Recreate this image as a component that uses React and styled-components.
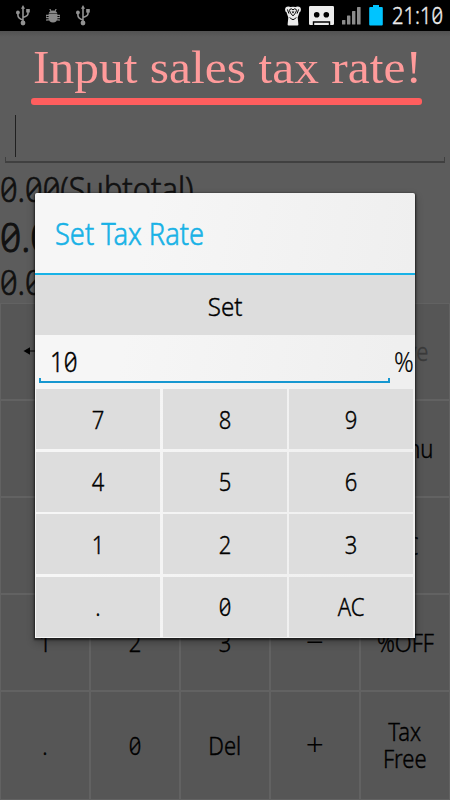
import React from "react";
import styled, { createGlobalStyle } from "styled-components";

const Global = createGlobalStyle`
  * { box-sizing: border-box; }
  body { margin: 0; background: #000; font-family: "Noto Sans", "Open Sans", sans-serif; color: #000; }
`;

const Screen = styled.div`
  position: relative;
  width: 450px;
  height: 800px;
  overflow: hidden;
  display: flex;
  flex-direction: column;
  background: #5c5c5c;
`;

const StatusBar = styled.header`
  height: 31px;
  flex: none;
  display: flex;
  align-items: center;
  justify-content: space-between;
  padding: 0 7px 0 15px;
  background: #000;
`;

const StatusGroup = styled.div`
  display: flex;
  align-items: center;
  gap: ${(p) => p.$gap}px;
`;

const Label = styled.span`
  display: inline-block;
  flex: none;
  white-space: pre;
  font-size: ${(p) => p.$size}px;
  line-height: 1.08;
  font-weight: 300;
  color: ${(p) => p.$color || "#000"};
  -webkit-text-stroke: ${(p) => p.$stroke ?? 0.4}px currentColor;
  font-feature-settings: "zero" 1;
  text-align: center;
  transform: scaleX(${(p) => p.$stretch || 0.89});
  transform-origin: ${(p) => p.$origin || "center"};
`;

const Clock = styled.div`
  width: 51px;
  display: flex;
  margin-left: 1px;
`;

const Banner = styled.div`
  height: 75px;
  flex: none;
  display: flex;
  flex-direction: column;
  padding: 7px 28px 0 31px;
  background: linear-gradient(#525252, #5c5c5c 6px);
`;

const BannerText = styled.h1`
  margin: 0 0 0 2px;
  height: 60px;
  font: 400 47px/59px "Liberation Serif", serif;
  color: #ff9b9b;
  white-space: nowrap;
  transform: scaleX(1.053);
  transform-origin: left;
`;

const BannerRule = styled.div`
  height: 7px;
  border-radius: 3px;
  background: #ff5e5e;
`;

const AmountField = styled.div`
  height: 57px;
  flex: none;
  display: flex;
  flex-direction: column;
  padding: 9px 5px 0;
`;

const Caret = styled.div`
  width: 1px;
  height: 42px;
  margin-left: 10px;
  background: #202020;
`;

const FieldLine = styled.div`
  height: ${(p) => p.$height}px;
  border: solid ${(p) => p.$color};
  border-width: 0 ${(p) => p.$side}px 2px;
`;

const Totals = styled.div`
  height: 140px;
  flex: none;
  display: flex;
  flex-direction: column;
  align-items: flex-start;
  padding-top: 7px;
`;

const TotalRow = styled.div`
  height: ${(p) => p.$height}px;
  display: flex;
  align-items: center;
`;

const MainPad = styled.div`
  flex: 1;
  display: grid;
  grid-template-columns: repeat(5, 88px);
  grid-template-rows: 95px 95px 95px 95px 107px;
  gap: 2px;
  padding: 1px;
  background: #626262;
`;

const MainKey = styled.div`
  display: flex;
  flex-direction: column;
  align-items: center;
  justify-content: center;
  padding-bottom: 1px;
  background: #565656;
`;

const Dialog = styled.section`
  position: absolute;
  left: 35px;
  top: 193px;
  width: 380px;
  height: 445px;
  display: flex;
  flex-direction: column;
  border-radius: 2px 2px 0 0;
  background: linear-gradient(100deg, #f6f6f6 25%, #efefef 85%);
  box-shadow: 0 1px 2px 1px rgba(0, 0, 0, 0.55), 0 4px 8px rgba(0, 0, 0, 0.3);
`;

const DialogTitle = styled.div`
  height: 82px;
  flex: none;
  display: flex;
  align-items: center;
  padding: 2px 0 0 20px;
  border-bottom: 2px solid #18b2e6;
`;

const SetButton = styled.div`
  height: 60px;
  flex: none;
  display: flex;
  align-items: center;
  justify-content: center;
  padding-top: 2px;
  background: #ddd;
`;

const RateRow = styled.div`
  height: 54px;
  flex: none;
  display: flex;
  padding-left: 4px;
`;

const RateInput = styled.div`
  width: 351px;
  flex: none;
  display: flex;
  flex-direction: column;
`;

const RateValue = styled.div`
  height: 43px;
  display: flex;
  align-items: center;
  padding: 9px 0 0 11px;
`;

const Unit = styled.div`
  display: flex;
  align-items: center;
  height: 43px;
  padding: 9px 0 0 4px;
`;

const RatePad = styled.div`
  flex: 1;
  display: grid;
  grid-template-columns: repeat(3, 1fr);
  grid-template-rows: repeat(4, 1fr);
  gap: 2.5px;
  padding: 0 1.5px 1px 1px;
`;

const RateKey = styled.div`
  display: flex;
  align-items: center;
  justify-content: center;
  background: #ddd;
`;

const UsbIcon = () => (
  <svg width="16" height="22" viewBox="0 0 16 22" fill="none" stroke="#929292" strokeWidth="1.6">
    <path d="M8 3v15M8 15Q2.9 13.5 2.9 10V8M8 12.5q5-1.5 5-4V7" />
    <g fill="#929292" stroke="none">
      <path d="M8 0l2 3.7H6z" />
      <circle cx="8" cy="18" r="2.4" />
      <circle cx="2.9" cy="7.5" r="1.9" />
      <path d="M11.2 4h3.6v3.6h-3.6z" />
    </g>
  </svg>
);

const BugIcon = () => (
  <svg width="14" height="14" viewBox="0 0 14 14">
    <g fill="#8a8a8a">
      <path d="M2.6 4.6Q3.4 1.4 7 1.4t4.4 3.2z" />
      <path d="M2.6 5h8.8v4.2Q11 13.6 7 13.6T2.6 9.2z" />
    </g>
    <path d="M3.8 0l1.2 2M10.2 0L9 2M3 6.4H.4v1M3 8.6H0M3 10.8H.8v1M11 6.4h2.6v1M11 8.6h3M11 10.8h2.2v1" fill="none" stroke="#8a8a8a" strokeWidth="1.2" />
  </svg>
);

const BearIcon = () => (
  <svg width="16" height="20" viewBox="0 0 16 20">
    <g fill="#ececec">
      <circle cx="3.3" cy="3.6" r="3.2" />
      <circle cx="12.7" cy="3.6" r="3.2" />
      <path d="M3 2q5-2.6 10 0l1.3 5-1.6 4.4.7 7q0 1-1 1H3.6q-1 0-1-1l.7-7L1.7 7z" />
    </g>
    <path d="M8 3.9Q6.4 2 4.8 3.4 3.7 5.5 8 9.9 12.3 5.5 11.2 3.4 9.6 2 8 3.9zM2.4 3.4l1.5 4.2M13.6 3.4l-1.5 4.2M4.8 11.4Q8 15.8 11.2 11.4" fill="none" stroke="#000" strokeWidth="1" />
    <path d="M6.6 5.4h2.8L8 7.4z" fill="#000" />
  </svg>
);

const CassetteIcon = () => (
  <svg width="25" height="19" viewBox="0 0 25 19">
    <path d="M1.2 0h22.6Q25 0 25 1.2V17.8Q25 19 23.8 19H1.2Q0 19 0 17.8V1.2Q0 0 1.2 0z" fill="#ececec" />
    <circle cx="7.7" cy="8.8" r="2.8" />
    <circle cx="17.3" cy="8.8" r="2.8" />
    <path d="M4.5 19v-3h16v3" fill="none" stroke="#000" strokeWidth="1.4" />
  </svg>
);

const SignalIcon = () => (
  <svg width="19" height="19" viewBox="0 0 19 19" fill="#8b8b8b">
    <rect x="0" y="14" width="3.4" height="4.5" rx=".6" />
    <rect x="5" y="9.5" width="3.4" height="9" rx=".6" />
    <rect x="10" y="5" width="3.4" height="13.5" rx=".6" />
    <rect x="15" y="1" width="3.6" height="17.5" rx=".6" />
  </svg>
);

const BatteryIcon = () => (
  <svg width="14" height="21" viewBox="0 0 14 21">
    <path d="M4 0h6v2h2.8q1 0 1 1v16.5q0 1-1 1H1.2q-1 0-1-1V3q0-1 1-1H4z" fill="#00c4ff" />
  </svg>
);

const ArrowIcon = () => (
  <svg width="44" height="8" viewBox="0 0 44 8">
    <path d="M0.5 4l6.5-3.7v7.4z" />
    <path d="M5 4h39" stroke="#000" strokeWidth="1.2" />
  </svg>
);

const mainKeys = [
  <ArrowIcon />, "", "", "", "Save",
  "7", "8", "9", "×", "Menu",
  "4", "5", "6", "÷", "AC",
  "1", "2", "3", "−", "%OFF",
  ".", "0", "Del", "+", ["Tax", "Free"],
];
const rateKeys = ["7", "8", "9", "4", "5", "6", "1", "2", "3", ".", "0", "AC"];
const operators = ["×", "÷", "−", "+"];

const renderKey = (key) => {
  if (React.isValidElement(key)) return key;
  const isOperator = operators.includes(key);
  return [].concat(key).map((line) => (
    <Label
      key={line}
      $size={isOperator ? 31 : 25}
      $stretch={isOperator ? 1.02 : 0.88}
      $stroke={isOperator ? 0 : 0.4}
      $color={line === "Save" ? "#3a3a3a" : "#000"}
    >
      {line}
    </Label>
  ));
};

export default function App() {
  return (
    <Screen>
      <Global />
      <StatusBar>
        <StatusGroup $gap={15}>
          <UsbIcon />
          <BugIcon />
          <UsbIcon />
        </StatusGroup>
        <StatusGroup $gap={8}>
          <BearIcon />
          <CassetteIcon />
          <SignalIcon />
          <BatteryIcon />
          <Clock>
            <Label $size={23.5} $stretch={0.86} $origin="left" $color="#ececec">21:10</Label>
          </Clock>
        </StatusGroup>
      </StatusBar>
      <Banner>
        <BannerText>Input sales tax rate!</BannerText>
        <BannerRule />
      </Banner>
      <AmountField>
        <Caret />
        <FieldLine $height={6} $side={1} $color="#404040" />
      </AmountField>
      <Totals>
        <TotalRow $height={38}>
          <Label $size={34} $stretch={0.905} $origin="left" $color="#111" $stroke={0.7}>0.00(Subtotal)</Label>
        </TotalRow>
        <TotalRow $height={56}>
          <Label $size={41} $stretch={0.905} $origin="left" $color="#111" $stroke={1.1}>0.00</Label>
        </TotalRow>
        <TotalRow $height={36}>
          <Label $size={34} $stretch={0.905} $origin="left" $color="#111" $stroke={0.7}>0.00</Label>
        </TotalRow>
      </Totals>
      <MainPad>
        {mainKeys.map((key, i) => (
          <MainKey key={i}>{renderKey(key)}</MainKey>
        ))}
      </MainPad>
      <Dialog>
        <DialogTitle>
          <Label $size={31} $stretch={0.878} $origin="left" $color="#18b2e6" $stroke={0.6}>Set Tax Rate</Label>
        </DialogTitle>
        <SetButton>
          <Label $size={26.5} $stretch={0.91}>Set</Label>
        </SetButton>
        <RateRow>
          <RateInput>
            <RateValue>
              <Label $size={28} $stretch={0.86} $origin="left">10</Label>
            </RateValue>
            <FieldLine $height={5} $side={2} $color="#1697d0" />
          </RateInput>
          <Unit>
            <Label $size={28} $stretch={0.87} $origin="left" $stroke={0.2}>%</Label>
          </Unit>
        </RateRow>
        <RatePad>
          {rateKeys.map((key) => (
            <RateKey key={key}>
              <Label $size={25} $stretch={0.88}>{key}</Label>
            </RateKey>
          ))}
        </RatePad>
      </Dialog>
    </Screen>
  );
}
